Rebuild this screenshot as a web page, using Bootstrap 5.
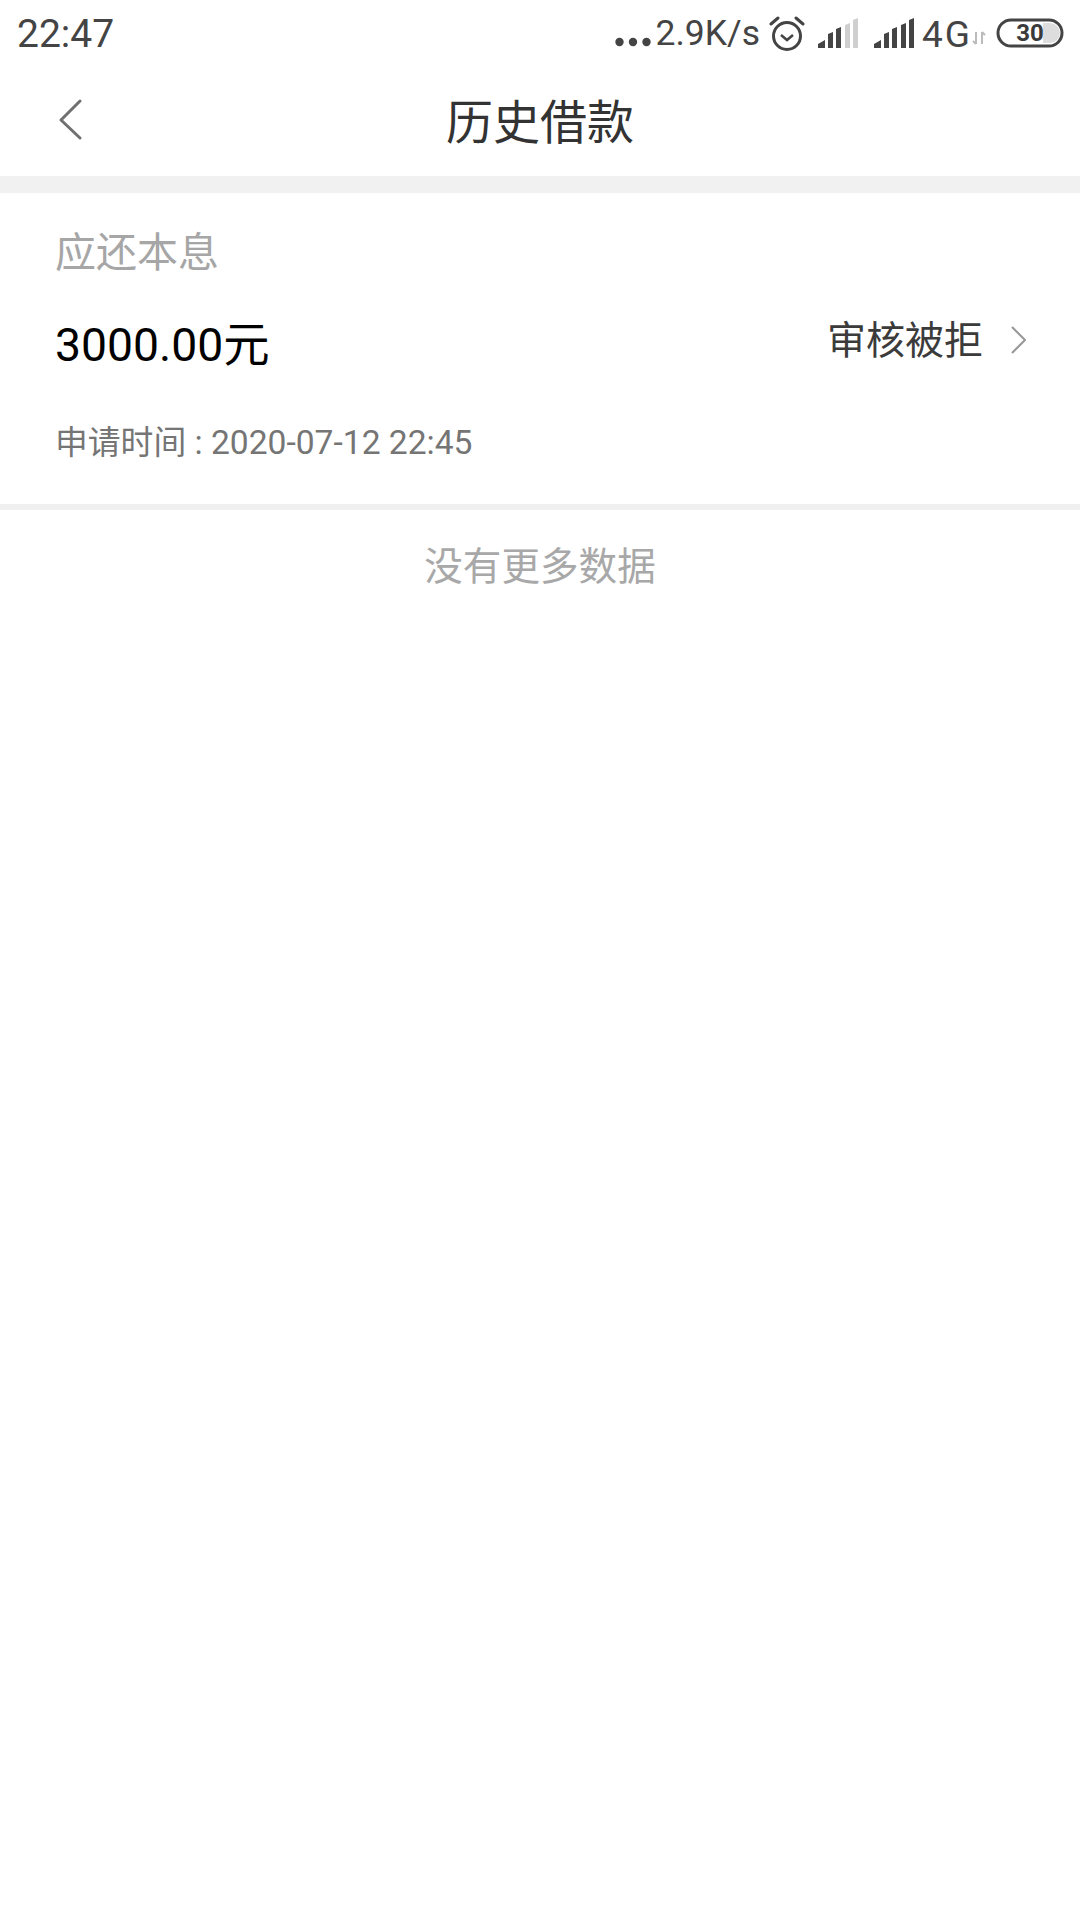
<!DOCTYPE html>
<html lang="zh">
<head>
<meta charset="utf-8">
<title>历史借款</title>
<link rel="stylesheet" href="https://cdn.jsdelivr.net/npm/bootstrap@5.3.0/dist/css/bootstrap.min.css">
<style>
html,body{width:1080px;height:1920px;margin:0;background:#fff;overflow:hidden}
body{font-family:Roboto,"Noto Sans CJK SC",sans-serif;color:#333}
.status-strip{height:66px;padding:0 16px 0 17px;color:#444}
.clock-text{font-size:39px;line-height:1;padding-top:3px}
.status-text{font-size:35.5px;line-height:1;padding-top:2px}
.wide-text{font-size:37px;letter-spacing:2px}
.gap-alarm{margin-left:9px}
.gap-sig1{margin-left:13px}
.gap-sig2{margin-left:16px}
.gap-net{margin-left:8px}
.gap-batt{margin-left:10px}
.batt-num{font-size:24px;line-height:1;font-weight:700;color:#3a3a3a}
.title-bar{height:110px;padding-top:4px}
.title-text{font-size:47px;line-height:1.2;color:#333;margin:0;font-weight:400}
.back-link{left:57px;top:33px;line-height:0}
.band-gap{height:17px;background:#f1f1f1}
.loan-item{height:311px;padding:36px 54px 0 55px}
.label-text{font-size:41px;line-height:1.2;color:#a6a6a6}
.amount-row{margin-top:40px}
.amount-text{font-size:46.3px;line-height:1.2;color:#000}
.state-wrap{gap:28px;margin-bottom:9px}
.state-text{font-size:39px;line-height:1.2;color:#3b3b3b}
.state-arrow{margin-top:-3px}
.time-text{font-size:33.6px;line-height:1.2;color:#757575;margin-top:49px}
.time-label{font-size:32.8px}
.item-rule{height:6px;background:#f0f0f0}
.end-note{font-size:38.6px;line-height:1.2;color:#a8a8a8;padding-top:34px}
</style>
</head>
<body>
<div class="status-strip d-flex justify-content-between align-items-center">
  <span class="clock-text">22:47</span>
  <div class="d-flex align-items-center">
    <svg width="36" height="36" viewBox="0 0 36 36" class="me-1"><circle cx="4.5" cy="27" r="4.2" fill="#444"/><circle cx="18" cy="27" r="4.2" fill="#444"/><circle cx="31.5" cy="27" r="4.2" fill="#444"/></svg>
    <span class="status-text">2.9K/s</span>
    <svg width="36" height="36" viewBox="0 0 36 36" class="gap-alarm" fill="none" stroke="#444" stroke-width="3"><circle cx="18" cy="21" r="13.5"/><path d="M12 20l6 5 6-5" stroke-width="2.5"/><path d="M2 9l7-6M34 9l-7-6" stroke-linecap="round"/></svg>
    <svg width="40" height="30" viewBox="0 0 40 30" class="gap-sig1"><path d="M0 30v-4l7-4v8zM10 30V16l5-2v16zM18 30V11l5-2v21z" fill="#444"/><path d="M27 30V7l5-2v25zM35 30V2l5-2v30z" fill="#cfcfcf"/></svg>
    <svg width="40" height="30" viewBox="0 0 40 30" class="gap-sig2"><path d="M0 30v-4l7-4v8zM10 30V16l5-2v16zM18 30V11l5-2v21zM27 30V7l5-2v25zM35 30V2l5-2v30z" fill="#444"/></svg>
    <span class="status-text wide-text gap-net">4G</span>
    <svg width="14" height="14" viewBox="0 0 14 14" class="align-self-end mb-2" fill="none" stroke="#bbb" stroke-width="2"><path d="M4 1v12M1 10l3 3M10 13V1M13 4l-3-3"/></svg>
    <div class="position-relative gap-batt">
      <svg width="68" height="30" viewBox="0 0 68 30" class="d-block"><rect x="2" y="2" width="64" height="26" rx="13" fill="#fff" stroke="#444" stroke-width="3"/><path d="M47 5h7a10 10 0 0 1 0 20h-7z" fill="#ddd"/></svg>
      <span class="batt-num position-absolute top-50 start-50 translate-middle">30</span>
    </div>
  </div>
</div>
<header class="title-bar position-relative d-flex justify-content-center align-items-center">
  <a class="back-link position-absolute" href="#"><svg width="26" height="42" viewBox="0 0 26 42" fill="none" stroke="#707070" stroke-width="3" stroke-linecap="round" stroke-linejoin="round"><path d="M23 2L4 21l19 18"/></svg></a>
  <h1 class="title-text">历史借款</h1>
</header>
<div class="band-gap"></div>
<section class="loan-item d-flex flex-column">
  <div class="label-text">应还本息</div>
  <div class="amount-row d-flex justify-content-between align-items-center">
    <span class="amount-text">3000.00元</span>
    <span class="state-wrap d-flex align-items-center">
      <span class="state-text">审核被拒</span>
      <svg width="15" height="28" viewBox="0 0 15 28" class="state-arrow" fill="none" stroke="#999" stroke-width="2.2"><path d="M1 1l13 13L1 27"/></svg>
    </span>
  </div>
  <div class="time-text"><span class="time-label">申请时间</span> : 2020-07-12 22:45</div>
</section>
<div class="item-rule"></div>
<div class="end-note text-center">没有更多数据</div>
</body>
</html>
